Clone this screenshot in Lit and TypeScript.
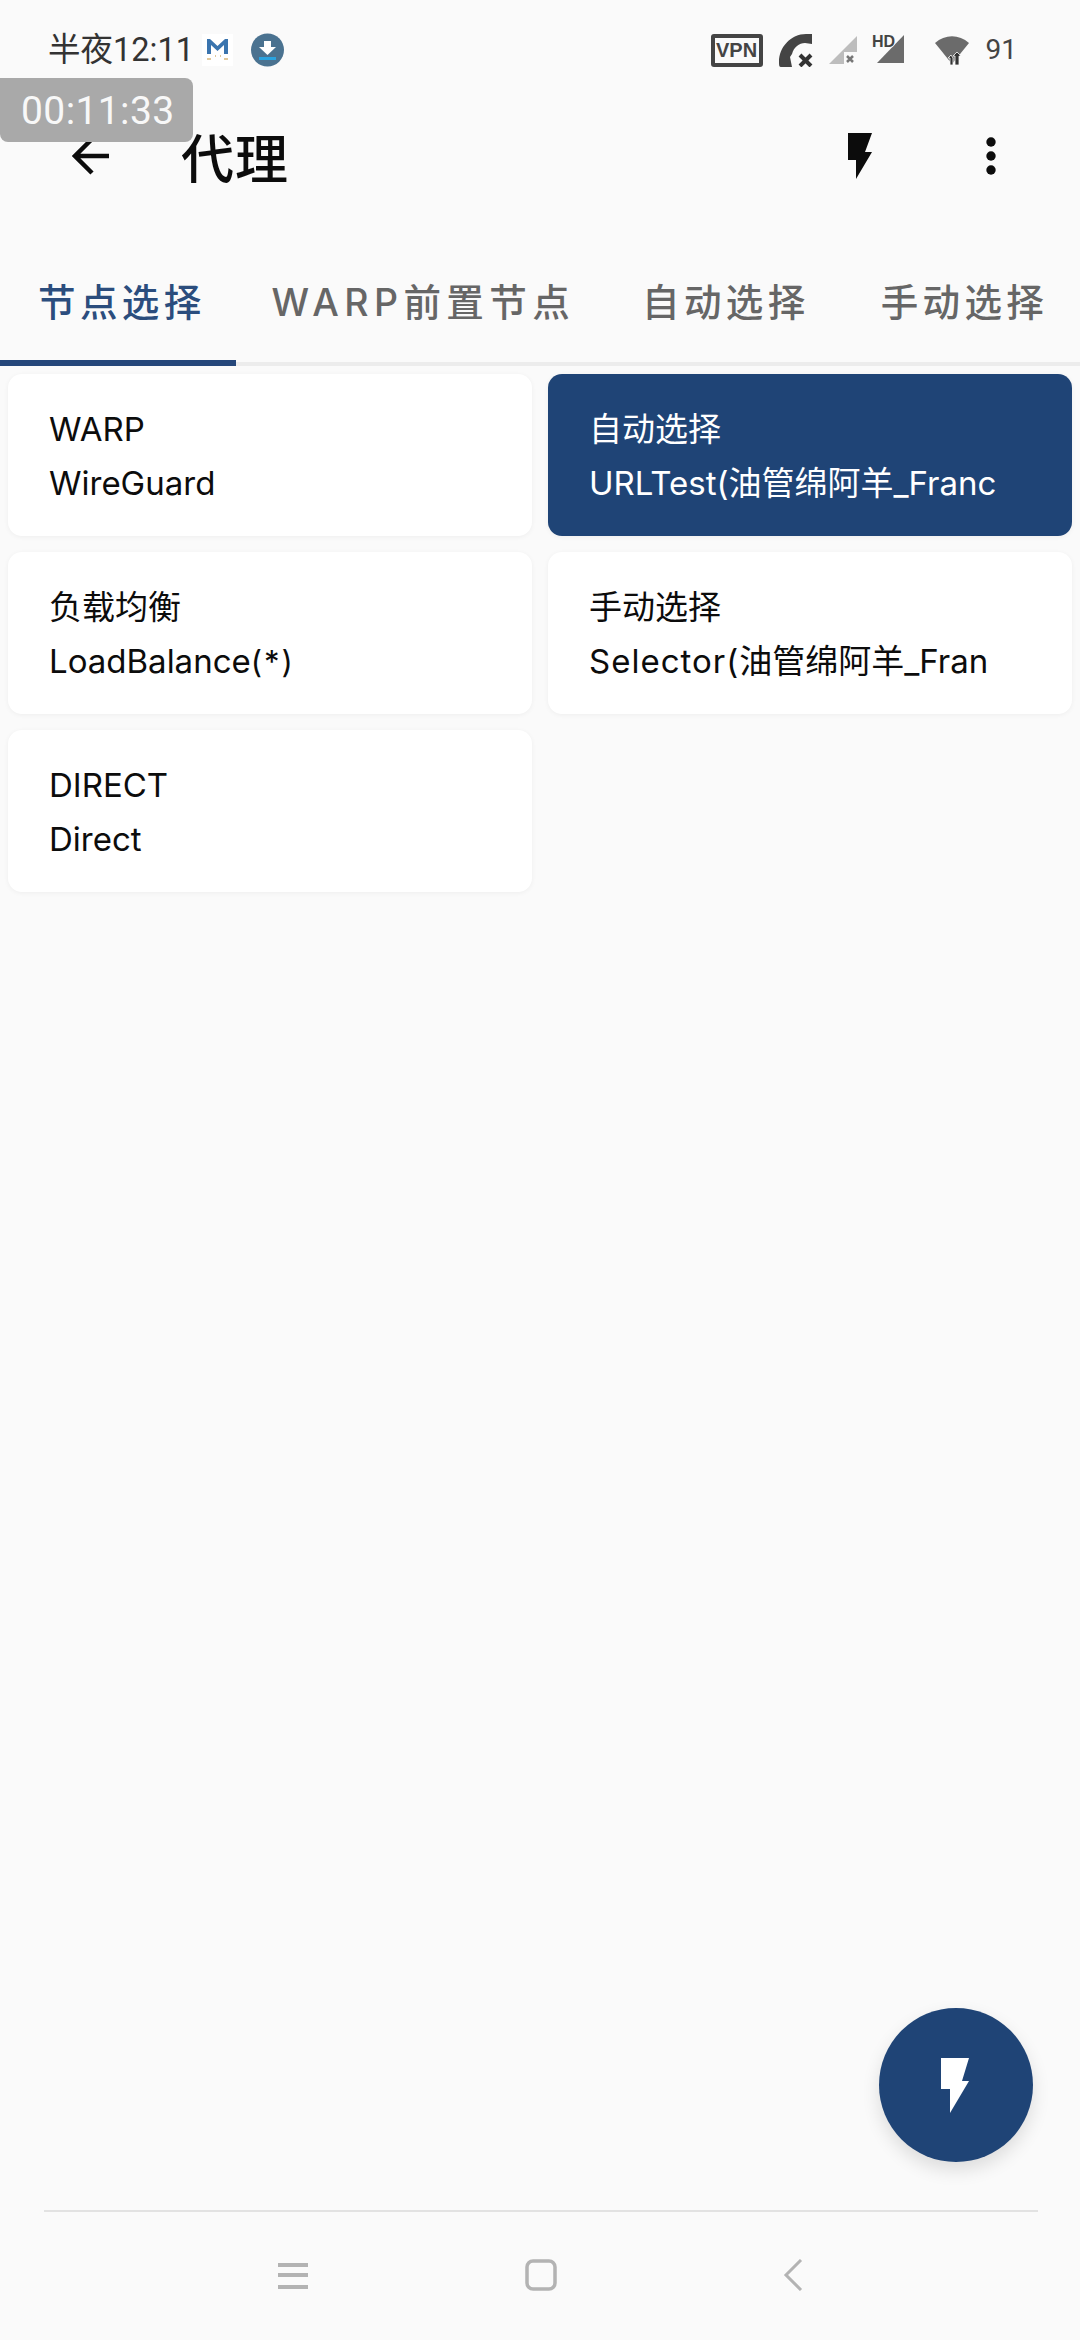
import { LitElement, html, css } from "lit";
import { customElement } from "lit/decorators.js";

interface Card { title: string; sub: string; head?: string; active?: boolean }
const cards: Card[] = [
  { title: "WARP", sub: "WireGuard" },
  { title: "自动选择", sub: "URLTest(油管绵阿羊_Franc", active: true },
  { title: "负载均衡", sub: "LoadBalance", head: "(*)" },
  { title: "手动选择", sub: "油管绵阿羊_Fran", head: "Selector(" },
  { title: "DIRECT", sub: "Direct" },
];
const tabs = ["节点选择", "WARP前置节点", "自动选择", "手动选择"];

@customElement("app-root")
export class AppRoot extends LitElement {
  static styles = css`
    :host {
      display: flex;
      flex-direction: column;
      position: relative;
      width: 1080px;
      height: 2340px;
      overflow: hidden;
      background: #fafafa;
      font-family: "Inter", "Noto Sans CJK SC", sans-serif;
    }
    .status {
      display: flex;
      align-items: flex-start;
      height: 100px;
      flex: none;
      padding: 32px 0 0 48px;
      box-sizing: border-box;
    }
    .status-inner {
      display: flex;
      align-items: center;
      height: 36px;
      width: 100%;
    }
    .time {
      font-family: "Roboto", "Noto Sans CJK SC", sans-serif;
      font-size: 32.5px;
      line-height: 36px;
      color: #333;
      width: 154px;
      white-space: nowrap;
    }
    .mail { width: 31px; height: 32px; background: #fff; display: block; }
    .dl { width: 33px; height: 34px; margin-left: 18px; display: block; }
    .spacer { flex: 1; }
    .vpn {
      box-sizing: border-box;
      width: 52px;
      height: 33px;
      border: 4px solid #444;
      border-radius: 3px;
      font-family: "Liberation Sans", sans-serif;
      font-weight: 700;
      font-size: 20px;
      line-height: 25px;
      text-align: center;
      color: #444;
    }
    .phone { width: 34px; height: 33px; margin-left: 16px; display: block; }
    .sig1 { width: 28px; height: 30px; margin-left: 16px; display: block; }
    .sig2 { width: 32px; height: 36px; margin-left: 15px; margin-top: -4px; display: block; overflow: visible; }
    .wifi { width: 34px; height: 32px; margin-left: 31px; display: block; }
    .batt {
      font-family: "Roboto", sans-serif;
      font-size: 28px;
      line-height: 34px;
      color: #444;
      margin-left: 17px;
      margin-right: 63px;
    }
    .timer {
      position: absolute;
      left: 0;
      top: 78px;
      width: 193px;
      height: 64px;
      border-radius: 0 8px 8px 8px;
      background: #a9a9a9;
      color: #f8f8f8;
      font-family: "Roboto", sans-serif;
      font-size: 39px;
      line-height: 66px;
      padding-left: 21px;
      box-sizing: border-box;
      letter-spacing: 0.4px;
    }
    .appbar {
      display: flex;
      align-items: center;
      height: 112px;
      flex: none;
      margin-bottom: 24px;
      padding-left: 72px;
    }
    .back { width: 37px; height: 38px; display: block; }
    .title {
      font-family: "Noto Sans CJK SC", sans-serif;
      font-weight: 500;
      font-size: 53px;
      line-height: 60px;
      color: #0c0c0c;
      margin-left: 72px;
      letter-spacing: 1px;
    }
    .bolt { width: 24px; height: 46px; display: block; margin-left: 559px; }
    .dots { width: 10px; height: 38px; display: block; margin-left: 114px; }
    .tabs {
      display: flex;
      flex: none;
      height: 130px;
      border-bottom: 4px solid #ececec;
      box-sizing: border-box;
      font-family: "Inter", "Noto Sans CJK SC", sans-serif;
      font-size: 37.5px;
      font-weight: 500;
      letter-spacing: 4.4px;
      color: #666;
    }
    .tab {
      display: flex;
      align-items: center;
      padding: 0 33px 0 38px;
      white-space: nowrap;
      position: relative;
    }
    .tab.on { color: #2b4d7d; padding-right: 30px; }
    .tab.on + .tab { padding-left: 36px; padding-right: 29px; letter-spacing: 5.4px; }
    .tab.on::after {
      content: "";
      position: absolute;
      left: 0;
      right: 0;
      bottom: -4px;
      height: 6px;
      background: #25477a;
    }
    .grid {
      display: grid;
      grid-template-columns: 524px 524px;
      grid-auto-rows: 162px;
      column-gap: 16px;
      row-gap: 16px;
      padding: 8px;
      flex: 1;
      align-content: start;
    }
    .card {
      background: #fff;
      border-radius: 14px;
      box-shadow: 0 1px 5px rgba(0, 0, 0, 0.05);
      padding: 28px 0 0 41px;
      box-sizing: border-box;
      color: #0c0c0c;
      font-size: 33px;
      line-height: 54px;
      white-space: nowrap;
      overflow: hidden;
    }
    .card.on { background: #1f4476; color: #fff; }
    .selector { letter-spacing: 1px; }
    .star { letter-spacing: 2px; font-size: 31px; }
    .fab {
      position: absolute;
      left: 879px;
      top: 2008px;
      width: 154px;
      height: 154px;
      border-radius: 50%;
      background: #1f4476;
      box-shadow: 0 8px 18px rgba(0, 0, 0, 0.12);
      display: flex;
      align-items: center;
      justify-content: center;
    }
    .fab svg { width: 28px; height: 55px; display: block; margin-left: -3px; }
    .nav {
      flex: none;
      height: 130px;
      margin: 0 42px 0 44px;
      border-top: 2px solid #e2e2e2;
      box-sizing: border-box;
      display: flex;
      align-items: flex-start;
      padding: 47px 0 0 234px;
    }
    .nav svg { display: block; }
    .n1 { width: 30px; height: 32px; }
    .n2 { width: 32px; height: 32px; margin-left: 217px; }
    .n3 { width: 20px; height: 32px; margin-left: 226px; }
  `;

  private sub(c: Card) {
    if (c.head === "(*)") return html`${c.sub}<span class="star">${c.head}</span>`;
    if (c.head) return html`<span class="selector">${c.head}</span>${c.sub}`;
    return c.sub;
  }

  render() {
    return html`
      <div class="status">
        <div class="status-inner">
          <span class="time">半夜12:11</span>
          <svg class="mail" viewBox="0 0 31 32">
            <path d="M5 20V5h3l7.500 7L23 5h3v15h-4V11l-6.500 6L9 11v9z" fill="#3a74ae" />
            <path d="M5 25h4M13 22h1M18 22h1M22 25h4" stroke="#d8b77a" stroke-width="1.500" />
          </svg>
          <svg class="dl" viewBox="0 0 33 34">
            <circle cx="16.500" cy="17" r="16.500" fill="#4a7290" />
            <path d="M13 8h7v6h5l-8.500 8L8 14h5z" fill="#fff" />
            <rect x="8" y="24" width="17" height="3" fill="#2aa3e0" />
          </svg>
          <span class="spacer"></span>
          <div class="vpn">VPN</div>
          <svg class="phone" viewBox="0 0 34 33">
            <path d="M33 0v10l-7-1c-6 0-11 4-13 11l-2 3 2 10H2c-2 0-2-2-2-5C0 13 12 0 27 0z" fill="#444" />
            <path d="M21 21l11 11M32 21L21 32" stroke="#333" stroke-width="4" fill="none" />
          </svg>
          <svg class="sig1" viewBox="0 0 28 30">
            <path d="M28 1v28H0z" fill="#bdbdbd" />
            <rect x="15" y="17" width="13" height="13" fill="#fafafa" />
            <path d="M18 21l6 6M24 21l-6 6" stroke="#777" stroke-width="2.500" />
          </svg>
          <svg class="sig2" viewBox="0 0 32 36">
            <path d="M32 5v28H5z" fill="#6b6b6b" />
            <text x="0" y="17" font-family="Liberation Sans" font-weight="700" font-size="16" fill="#444" stroke="#fafafa" stroke-width="1.500" paint-order="stroke">HD</text>
          </svg>
          <svg class="wifi" viewBox="0 0 34 32">
            <path d="M0 9C10 0 24 0 34 9L17 30z" fill="#6b6b6b" />
            <path d="M20 31V22h-2l4-4 4 4h-2v9zM15 31v-7h-2l3-3 2 3v7z" fill="#333" stroke="#fafafa" stroke-width="0.800" />
          </svg>
          <span class="batt">91</span>
        </div>
      </div>
      <div class="timer">00:11:33</div>

      <div class="appbar">
        <svg class="back" viewBox="0 0 37 38">
          <path d="M37 19H3M20 2L3 19l17 17" fill="none" stroke="#0c0c0c" stroke-width="4.500" />
        </svg>
        <span class="title">代理</span>
        <svg class="bolt" viewBox="0 0 24 46"><path d="M0 0h24l-7 19h7L8 46V27H0z" fill="#0c0c0c" /></svg>
        <svg class="dots" viewBox="0 0 10 38">
          <circle cx="5" cy="5" r="4.700" fill="#0c0c0c" />
          <circle cx="5" cy="19" r="4.700" fill="#0c0c0c" />
          <circle cx="5" cy="33" r="4.700" fill="#0c0c0c" />
        </svg>
      </div>

      <div class="tabs">
        ${tabs.map((t, i) => html`<div class="tab ${i === 0 ? "on" : ""}">${t}</div>`)}
      </div>

      <div class="grid">
        ${cards.map(
          (c) => html`<div class="card ${c.active ? "on" : ""}"><div>${c.title}</div><div>${this.sub(c)}</div></div>`
        )}
      </div>

      <div class="fab">
        <svg viewBox="0 0 28 55"><path d="M0 0h28l-7 23h7L9 55V31H0z" fill="#fff" /></svg>
      </div>

      <div class="nav">
        <svg class="n1" viewBox="0 0 30 32">
          <path d="M0 6h30M0 16h30M0 28h30" stroke="#b3b3b3" stroke-width="4" />
        </svg>
        <svg class="n2" viewBox="0 0 32 32">
          <rect x="2" y="2" width="28" height="28" rx="6" fill="none" stroke="#b3b3b3" stroke-width="3.500" />
        </svg>
        <svg class="n3" viewBox="0 0 20 32">
          <path d="M18 1L3 16l15 15" fill="none" stroke="#b3b3b3" stroke-width="3" />
        </svg>
      </div>
    `;
  }
}
